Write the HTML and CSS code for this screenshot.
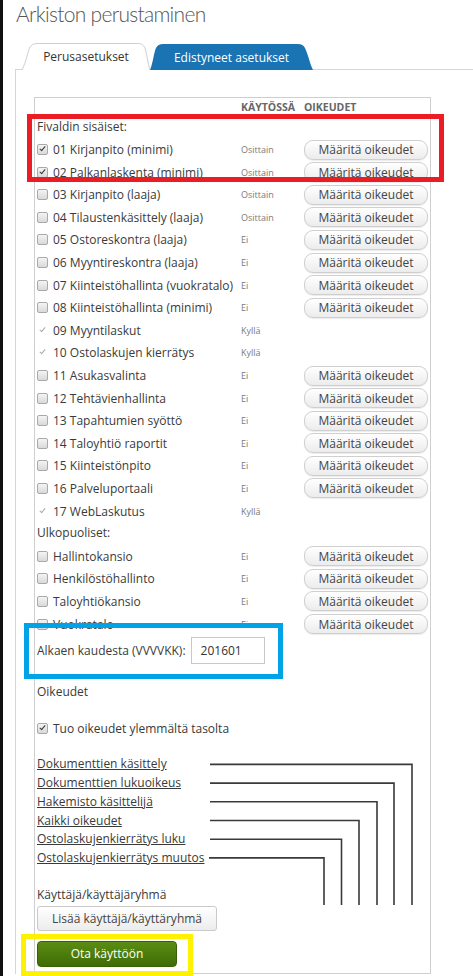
FILE: index.html
```html
<!DOCTYPE html>
<html lang="fi">
<head>
<meta charset="utf-8">
<title>Arkiston perustaminen</title>
<link rel="stylesheet" href="styles.css">
</head>
<body>
<div class="page">
  <h1 class="title">Arkiston perustaminen</h1>
  <div class="tabs">
    <div class="tab tab-basic">
      <svg class="tab-bg" viewBox="0 0 128 27" preserveAspectRatio="none"><path d="M0,27 C4,19 6,8 8,4 Q10,0.5 15,0.5 L116,0.5 Q121,0.5 123,5 C125,11 126,21 128,27" fill="#fff" stroke="#cfcfcf" stroke-width="1"/></svg>
      <span class="tab-text">Perusasetukset</span>
    </div>
    <div class="tab tab-adv">
      <svg class="tab-bg" viewBox="0 0 163 26" preserveAspectRatio="none"><path d="M0,26 C3,19 4,8 6,4 Q8,0 13,0 L148,0 Q153,0 155,4 C158,10 160,20 163,26 Z" fill="#1a73b3"/></svg>
      <span class="tab-text">Edistyneet asetukset</span>
    </div>
  </div>
  <div class="panel">
    <div class="box">
      <div class="head"><span></span><span>KÄYTÖSSÄ</span><span>OIKEUDET</span></div>
      <div class="group">Fivaldin sisäiset:</div>
      <div class="row"><span class="lbl"><span class="cb on"></span>01 Kirjanpito (minimi)</span><span class="st">Osittain</span><button class="btn">Määritä oikeudet</button></div>
      <div class="row"><span class="lbl"><span class="cb on"></span>02 Palkanlaskenta (minimi)</span><span class="st">Osittain</span><button class="btn">Määritä oikeudet</button></div>
      <div class="row"><span class="lbl"><span class="cb"></span>03 Kirjanpito (laaja)</span><span class="st">Osittain</span><button class="btn">Määritä oikeudet</button></div>
      <div class="row"><span class="lbl"><span class="cb"></span>04 Tilaustenkäsittely (laaja)</span><span class="st">Osittain</span><button class="btn">Määritä oikeudet</button></div>
      <div class="row"><span class="lbl"><span class="cb"></span>05 Ostoreskontra (laaja)</span><span class="st">Ei</span><button class="btn">Määritä oikeudet</button></div>
      <div class="row"><span class="lbl"><span class="cb"></span>06 Myyntireskontra (laaja)</span><span class="st">Ei</span><button class="btn">Määritä oikeudet</button></div>
      <div class="row"><span class="lbl"><span class="cb"></span>07 Kiinteistöhallinta (vuokratalo)</span><span class="st">Ei</span><button class="btn">Määritä oikeudet</button></div>
      <div class="row"><span class="lbl"><span class="cb"></span>08 Kiinteistöhallinta (minimi)</span><span class="st">Ei</span><button class="btn">Määritä oikeudet</button></div>
      <div class="row"><span class="lbl"><span class="cb dis"></span>09 Myyntilaskut</span><span class="st">Kyllä</span></div>
      <div class="row"><span class="lbl"><span class="cb dis"></span>10 Ostolaskujen kierrätys</span><span class="st">Kyllä</span></div>
      <div class="row"><span class="lbl"><span class="cb"></span>11 Asukasvalinta</span><span class="st">Ei</span><button class="btn">Määritä oikeudet</button></div>
      <div class="row"><span class="lbl"><span class="cb"></span>12 Tehtävienhallinta</span><span class="st">Ei</span><button class="btn">Määritä oikeudet</button></div>
      <div class="row"><span class="lbl"><span class="cb"></span>13 Tapahtumien syöttö</span><span class="st">Ei</span><button class="btn">Määritä oikeudet</button></div>
      <div class="row"><span class="lbl"><span class="cb"></span>14 Taloyhtiö raportit</span><span class="st">Ei</span><button class="btn">Määritä oikeudet</button></div>
      <div class="row"><span class="lbl"><span class="cb"></span>15 Kiinteistönpito</span><span class="st">Ei</span><button class="btn">Määritä oikeudet</button></div>
      <div class="row"><span class="lbl"><span class="cb"></span>16 Palveluportaali</span><span class="st">Ei</span><button class="btn">Määritä oikeudet</button></div>
      <div class="row"><span class="lbl"><span class="cb dis"></span>17 WebLaskutus</span><span class="st">Kyllä</span></div>
      <div class="group">Ulkopuoliset:</div>
      <div class="row"><span class="lbl"><span class="cb"></span>Hallintokansio</span><span class="st">Ei</span><button class="btn">Määritä oikeudet</button></div>
      <div class="row"><span class="lbl"><span class="cb"></span>Henkilöstöhallinto</span><span class="st">Ei</span><button class="btn">Määritä oikeudet</button></div>
      <div class="row"><span class="lbl"><span class="cb"></span>Taloyhtiökansio</span><span class="st">Ei</span><button class="btn">Määritä oikeudet</button></div>
      <div class="row"><span class="lbl"><span class="cb"></span>Vuokratalo</span><span class="st">Ei</span><button class="btn">Määritä oikeudet</button></div>

      <div class="period"><span>Alkaen kaudesta (VVVVKK):</span><span class="input">201601</span></div>
      <div class="sect">Oikeudet</div>
      <div class="inherit"><span class="cb on"></span>Tuo oikeudet ylemmältä tasolta</div>

      <div class="links">
        <a href="#">Dokumenttien käsittely</a>
        <a href="#">Dokumenttien lukuoikeus</a>
        <a href="#">Hakemisto käsittelijä</a>
        <a href="#">Kaikki oikeudet</a>
        <a href="#">Ostolaskujenkierrätys luku</a>
        <a href="#">Ostolaskujenkierrätys muutos</a>
        <svg class="wires" width="396" height="152" viewBox="0 0 396 152">
          <g fill="none" stroke="#3a3a3a" stroke-width="1.6">
            <path d="M173,9.4 H375 V150"/>
            <path d="M173,28.1 H357 V150"/>
            <path d="M173,46.8 H340 V150"/>
            <path d="M173,65.5 H322 V150"/>
            <path d="M173,84.2 H304.5 V150"/>
            <path d="M172,102.9 H287 V150"/>
          </g>
        </svg>
      </div>

      <div class="users">Käyttäjä/käyttäjäryhmä</div>
      <button class="btn-plain">Lisää käyttäjä/käyttäryhmä</button>
      <button class="btn-go">Ota käyttöön</button>
    </div>
  </div>

  <div class="mark mark-red"></div>
  <div class="mark mark-blue"></div>
  <div class="mark mark-yellow"></div>
</div>
</body>
</html>
```
FILE: styles.css
```css
html, body {
  margin: 0;
  padding: 0;
  background: #fff;
}
body {
  font-family: "Open Sans", "Liberation Sans", sans-serif;
  color: #3a3a3a;
  overflow: hidden;
}
.page {
  position: relative;
  height: 976px;
  border-left: 3px solid #111;
  box-sizing: border-box;
}
.title {
  margin: 0;
  padding: 0 0 0 13px;
  height: 43px;
  font-family: Lato, "Open Sans", sans-serif;
  font-size: 21px;
  letter-spacing: -0.7px;
  font-weight: 300;
  line-height: 28px;
  color: #555;
}
.tabs {
  display: flex;
  height: 27px;
  padding-left: 19px;
  position: relative;
  z-index: 2;
  margin-bottom: -1px;
}
.tab {
  position: relative;
  display: flex;
  align-items: center;
  justify-content: center;
  height: 27px;
  font-size: 12px;
}
.tab-bg {
  position: absolute;
  left: 0;
  top: 0;
  width: 100%;
  height: 100%;
}
.tab-text {
  position: relative;
}
.tab-basic {
  width: 128px;
  color: #333;
}
.tab-adv {
  width: 163px;
  color: #fff;
}
.tab-adv .tab-bg {
  top: 1px;
  height: 26px;
}
.tab-adv .tab-text {
  top: 1px;
}
.panel {
  margin-left: 12px;
  border-left: 1px solid #d6d6d6;
  border-top: 1px solid #d6d6d6;
  padding: 27px 0 0 18px;
}
.box {
  width: 397px;
  box-sizing: border-box;
  border: 1px solid #cfcfcf;
  height: 877px;
  padding: 0 0 0 2px;
  font-size: 12px;
}
.head {
  display: grid;
  grid-template-columns: 204px 63px 124px;
  height: 17.7px;
  align-items: center;
  font-size: 10.5px;
  font-weight: 700;
  color: #666;
}
.group {
  height: 22.6px;
  line-height: 22.6px;
}
.row {
  display: grid;
  grid-template-columns: 204px 63px 124px;
  align-items: center;
  height: 22.6px;
}
.lbl {
  display: flex;
  align-items: center;
  white-space: nowrap;
}
.cb {
  display: inline-block;
  position: relative;
  width: 9px;
  height: 9px;
  border: 1px solid #a9a9a9;
  border-radius: 2px;
  background: linear-gradient(#f4f4f4, #d9d9d9);
  margin-right: 5px;
  flex: none;
}
.cb.on::after, .cb.dis::after {
  content: "";
  position: absolute;
  left: 3px;
  top: 0px;
  width: 2px;
  height: 5px;
  border: solid #333;
  border-width: 0 1.5px 1.5px 0;
  transform: rotate(40deg);
}
.cb.dis {
  border-color: transparent;
  background: none;
}
.cb.dis::after {
  border-color: #aaa;
}
.st {
  font-size: 9px;
  color: #7a7a7a;
}
.btn {
  font-family: inherit;
  font-size: 12px;
  color: #444;
  height: 20px;
  width: 124px;
  padding: 0;
  border: 1px solid #cfcfcf;
  border-radius: 9px;
  background: linear-gradient(#ffffff, #ececec);
  box-shadow: 0 1px 1px rgba(0,0,0,0.08);
}
.period {
  display: flex;
  align-items: center;
  gap: 5px;
  height: 27px;
  margin-top: 1.5px;
}
.input {
  width: 74px;
  height: 27px;
  box-sizing: border-box;
  border: 1px solid #c8c8c8;
  padding-left: 9px;
  display: flex;
  align-items: center;
  color: #333;
}
.sect {
  margin-top: 19px;
  line-height: 18px;
}
.inherit {
  margin-top: 19px;
  line-height: 18px;
  display: flex;
  align-items: center;
}
.links {
  position: relative;
  margin-top: 17.6px;
}
.links a {
  display: block;
  width: max-content;
  line-height: 18.7px;
  color: #3a3a3a;
  text-decoration: underline;
}
.wires {
  position: absolute;
  left: 0;
  top: 0;
}
.users {
  margin-top: 18px;
  line-height: 18px;
}
.btn-plain {
  display: block;
  margin-top: 2px;
  width: 180px;
  height: 25px;
  font-family: inherit;
  font-size: 12px;
  color: #444;
  border: 1px solid #cacaca;
  border-radius: 3px;
  background: linear-gradient(#ffffff, #ececec);
  padding: 0;
}
.btn-go {
  display: block;
  margin-top: 10px;
  width: 140px;
  height: 26px;
  font-family: inherit;
  font-size: 12px;
  color: #fff;
  border: 1px solid #3b5f08;
  border-radius: 4px;
  background: linear-gradient(#5b8d14, #3f6c05);
  padding: 0;
}
.mark {
  position: absolute;
  box-sizing: border-box;
  border-style: solid;
  border-width: 5px;
  pointer-events: none;
}
.mark-red {
  left: 24px;
  top: 114px;
  width: 417px;
  height: 68px;
  border-color: #ec1c24;
}
.mark-blue {
  left: 21px;
  top: 623px;
  width: 259px;
  height: 56px;
  border-color: #00a2e8;
}
.mark-yellow {
  left: 18px;
  top: 934px;
  width: 172px;
  height: 42px;
  border-color: #fff200;
}
```
